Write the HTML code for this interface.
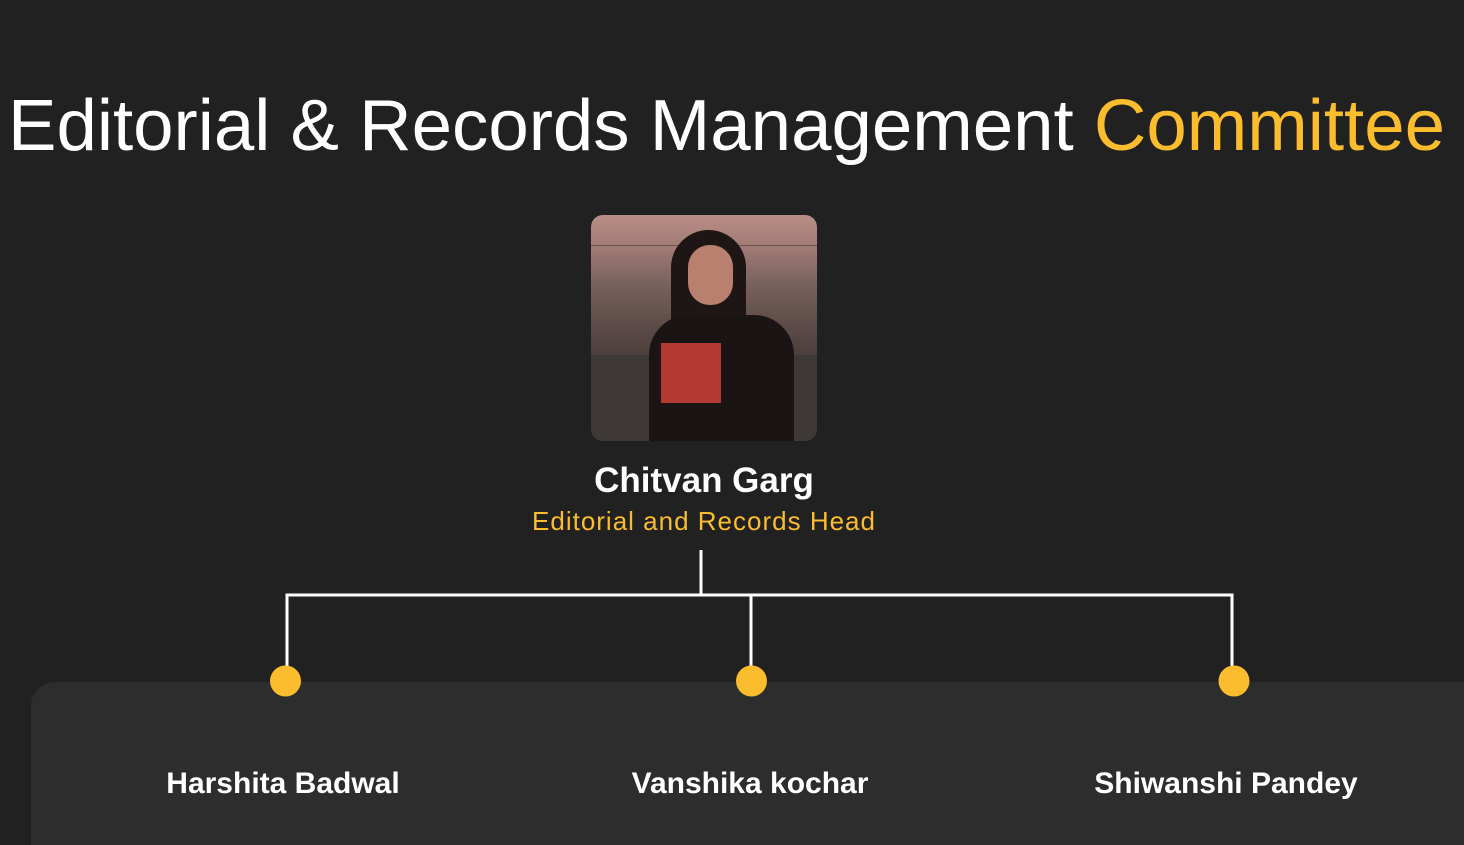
<!DOCTYPE html>
<html><head><style>
body{margin:0;width:1464px;height:845px;background:#212121;overflow:hidden;font-family:"Liberation Sans",sans-serif;position:relative}
.abs{position:absolute}
.photo{left:591px;top:215px;width:226px;height:226px;border-radius:12px;overflow:hidden;background:linear-gradient(180deg,#b98e86 0%,#a07a74 15%,#7a625e 30%,#5b4a47 50%,#3d3230 75%,#2c2422 100%)}
.name{color:#fff;font-size:30px;font-weight:bold;text-align:center;width:400px}
</style></head><body>
<svg class="abs" style="left:0;top:0" width="1464" height="845">
<text x="8" y="150" font-family="Liberation Sans, sans-serif" font-size="72" fill="#fff" textLength="1437" lengthAdjust="spacingAndGlyphs">Editorial &amp; Records Management <tspan fill="#fbbd2e">Committee</tspan></text>
<rect x="31" y="682" width="1460" height="200" rx="24" fill="#2d2d2d"/>
<g stroke="#fff" stroke-width="3" fill="none">
<line x1="701" y1="550" x2="701" y2="595"/>
<polyline points="287,680 287,595 1232,595 1232,680"/>
<line x1="751" y1="595" x2="751" y2="680"/>
</g>
<g fill="#fbbd2e"><circle cx="285.5" cy="681" r="15.5"/><circle cx="751.5" cy="681" r="15.5"/><circle cx="1234" cy="681" r="15.5"/></g>
</svg>
<div class="abs photo">
<div class="abs" style="left:0;top:30px;width:226px;height:1px;background:#6b5552"></div>
<div class="abs" style="left:0;top:140px;width:226px;height:86px;background:#3e3836"></div>
<div class="abs" style="left:80px;top:15px;width:75px;height:110px;border-radius:40px 40px 20px 20px;background:#1e1614"></div>
<div class="abs" style="left:97px;top:30px;width:45px;height:60px;border-radius:22px;background:#b98070"></div>
<div class="abs" style="left:58px;top:100px;width:145px;height:126px;border-radius:40px 40px 0 0;background:#1a1514"></div>
<div class="abs" style="left:70px;top:128px;width:60px;height:60px;background:#b33a30"></div>
</div>
<div class="abs" style="left:504px;top:461px;width:400px;text-align:center;color:#fff;font-size:35px;font-weight:bold">Chitvan Garg</div>
<div class="abs" style="left:454px;top:506px;width:500px;text-align:center;color:#fbbd2e;font-size:26px;letter-spacing:1px">Editorial and Records Head</div>
<div class="abs name" style="left:83px;top:767px">Harshita Badwal</div>
<div class="abs name" style="left:550px;top:767px">Vanshika kochar</div>
<div class="abs name" style="left:1026px;top:767px">Shiwanshi Pandey</div>
</body></html>
